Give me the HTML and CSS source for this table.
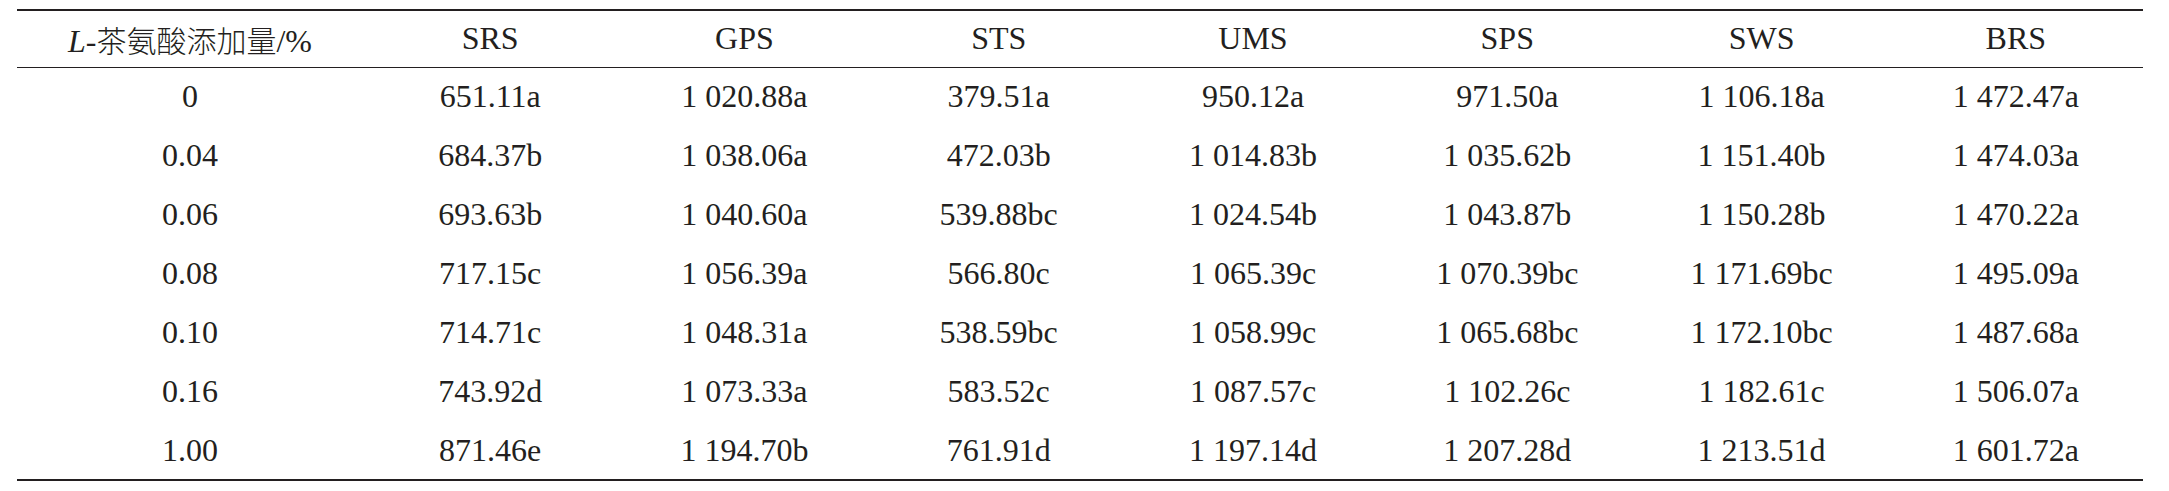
FILE: index.html
```html
<!DOCTYPE html>
<html>
<head>
    <meta charset="UTF-8">
    <meta name="viewport" content="width=device-width, initial-scale=1.0">
    <title>L-茶氨酸添加量对糊化特性的影响</title>
    <link rel="stylesheet" href="styles.css">
</head>
<body>
    <table class="data-table">
        <colgroup>
            <col class="col-first">
            <col span="7" class="col-value">
        </colgroup>
        <thead>
            <tr>
                <th><i>L</i>-<span class="cjk">茶氨酸添加量</span>/%</th>
                <th>SRS</th>
                <th>GPS</th>
                <th>STS</th>
                <th>UMS</th>
                <th>SPS</th>
                <th>SWS</th>
                <th>BRS</th>
            </tr>
        </thead>
        <tbody>
            <tr>
                <td>0</td>
                <td>651.11a</td>
                <td>1 020.88a</td>
                <td>379.51a</td>
                <td>950.12a</td>
                <td>971.50a</td>
                <td>1 106.18a</td>
                <td>1 472.47a</td>
            </tr>
            <tr>
                <td>0.04</td>
                <td>684.37b</td>
                <td>1 038.06a</td>
                <td>472.03b</td>
                <td>1 014.83b</td>
                <td>1 035.62b</td>
                <td>1 151.40b</td>
                <td>1 474.03a</td>
            </tr>
            <tr>
                <td>0.06</td>
                <td>693.63b</td>
                <td>1 040.60a</td>
                <td>539.88bc</td>
                <td>1 024.54b</td>
                <td>1 043.87b</td>
                <td>1 150.28b</td>
                <td>1 470.22a</td>
            </tr>
            <tr>
                <td>0.08</td>
                <td>717.15c</td>
                <td>1 056.39a</td>
                <td>566.80c</td>
                <td>1 065.39c</td>
                <td>1 070.39bc</td>
                <td>1 171.69bc</td>
                <td>1 495.09a</td>
            </tr>
            <tr>
                <td>0.10</td>
                <td>714.71c</td>
                <td>1 048.31a</td>
                <td>538.59bc</td>
                <td>1 058.99c</td>
                <td>1 065.68bc</td>
                <td>1 172.10bc</td>
                <td>1 487.68a</td>
            </tr>
            <tr>
                <td>0.16</td>
                <td>743.92d</td>
                <td>1 073.33a</td>
                <td>583.52c</td>
                <td>1 087.57c</td>
                <td>1 102.26c</td>
                <td>1 182.61c</td>
                <td>1 506.07a</td>
            </tr>
            <tr>
                <td>1.00</td>
                <td>871.46e</td>
                <td>1 194.70b</td>
                <td>761.91d</td>
                <td>1 197.14d</td>
                <td>1 207.28d</td>
                <td>1 213.51d</td>
                <td>1 601.72a</td>
            </tr>
        </tbody>
    </table>
</body>
</html>
```

FILE: styles.css
```css
* {
    margin: 0;
    padding: 0;
    box-sizing: border-box;
}

body {
    background: #fff;
    color: #231f20;
    font-family: "Liberation Serif", serif;
    padding: 9px 0 0 17px;
}

.data-table {
    width: 2126px;
    table-layout: fixed;
    border-collapse: collapse;
    border-top: 2px solid #231f20;
    border-bottom: 2px solid #231f20;
    font-size: 32px;
}

.col-first {
    width: 346px;
}

.data-table th,
.data-table td {
    font-family: "Liberation Serif", serif;
    text-align: center;
    font-weight: normal;
    white-space: nowrap;
}

.data-table th {
    height: 57px;
    border-bottom: 1px solid #231f20;
}

.data-table th i {
    font-style: italic;
}

.cjk {
    font-family: "Noto Sans CJK SC", sans-serif;
    font-weight: 300;
    font-size: 30px;
}

.data-table td {
    height: 59px;
}
```
